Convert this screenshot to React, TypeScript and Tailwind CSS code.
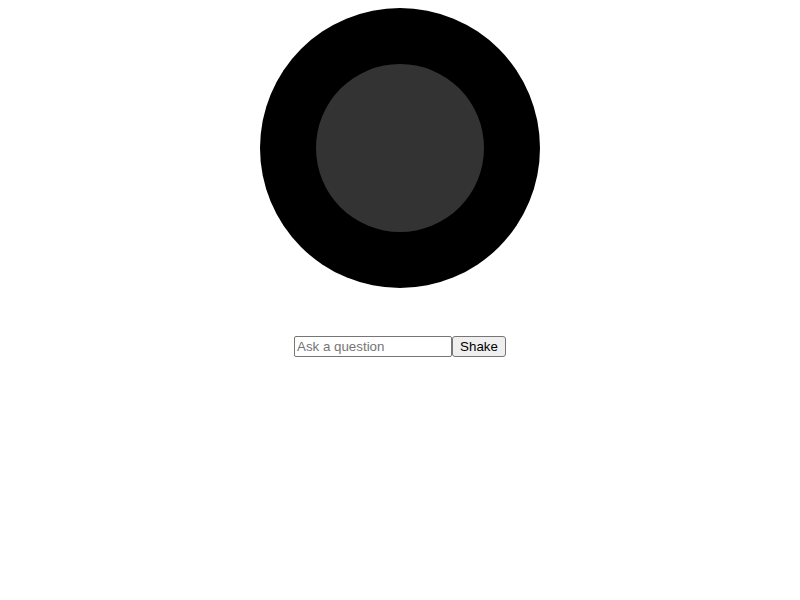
import React from "react";

const App: React.FC = () => {
  return (
    <div className="flex flex-col items-center pt-2 bg-white min-h-[600px]" style={{ fontFamily: '"Liberation Sans", Arial, sans-serif' }}>
      <div className="w-[280px] h-[280px] rounded-full bg-black flex items-center justify-center">
        <div className="w-[168px] h-[168px] rounded-full bg-[#333333]" />
      </div>

      <div className="flex mt-12">
        <input
          type="text"
          placeholder="Ask a question"
          className="w-[158px] h-[21px] border border-[#767676] rounded-[2px] px-[2px] text-[13.333px] text-black placeholder-[#757575] bg-white outline-none"
          style={{ fontFamily: '"Liberation Sans", Arial, sans-serif' }}
        />
        <button
          className="w-[54px] h-[21px] border border-[#767676] rounded-[3px] bg-[#efefef] text-[13.333px] text-black px-[6px]"
          style={{ fontFamily: '"Liberation Sans", Arial, sans-serif' }}
        >
          Shake
        </button>
      </div>
    </div>
  );
};

export default App;
